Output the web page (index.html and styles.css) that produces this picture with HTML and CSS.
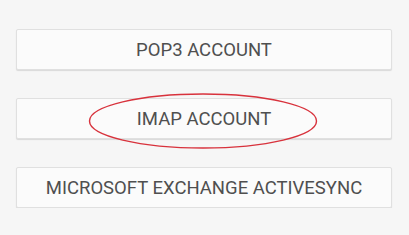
FILE: index.html
```html
<!DOCTYPE html>
<html lang="en">

<head>
  <meta charset="UTF-8">
  <meta name="viewport" content="width=device-width, initial-scale=1.0">
  <title>Add account</title>
  <link rel="stylesheet" href="styles.css">
</head>

<body>
  <div class="account-list">
    <div class="account-btn">POP3 ACCOUNT</div>
    <div class="account-btn imap">
      IMAP ACCOUNT
      <svg class="mark" width="232" height="58" viewBox="0 0 232 58">
        <ellipse cx="116" cy="29" rx="113.5" ry="27" fill="none" stroke="#d8323c" stroke-width="1.4" />
      </svg>
    </div>
    <div class="account-btn">MICROSOFT EXCHANGE ACTIVESYNC</div>
  </div>
</body>

</html>
```

FILE: styles.css
```css
body {
  margin: 0;
  background-color: #f6f6f6;
  font-family: Roboto, "Liberation Sans", sans-serif;
}

.account-list {
  display: flex;
  flex-direction: column;
  gap: 28px;
  padding: 29px 17px 0 16px;
}

.account-btn {
  position: relative;
  height: 39px;
  display: flex;
  align-items: center;
  justify-content: center;
  background-color: #fbfbfb;
  border: 1px solid #e0e0e0;
  border-radius: 2px;
  box-shadow: 0 1px 1px rgba(0, 0, 0, 0.12);
  color: #4f4f4f;
  font-size: 18.5px;
  letter-spacing: 0;
}

.mark {
  position: absolute;
  left: 70px;
  top: -7px;
}
```
